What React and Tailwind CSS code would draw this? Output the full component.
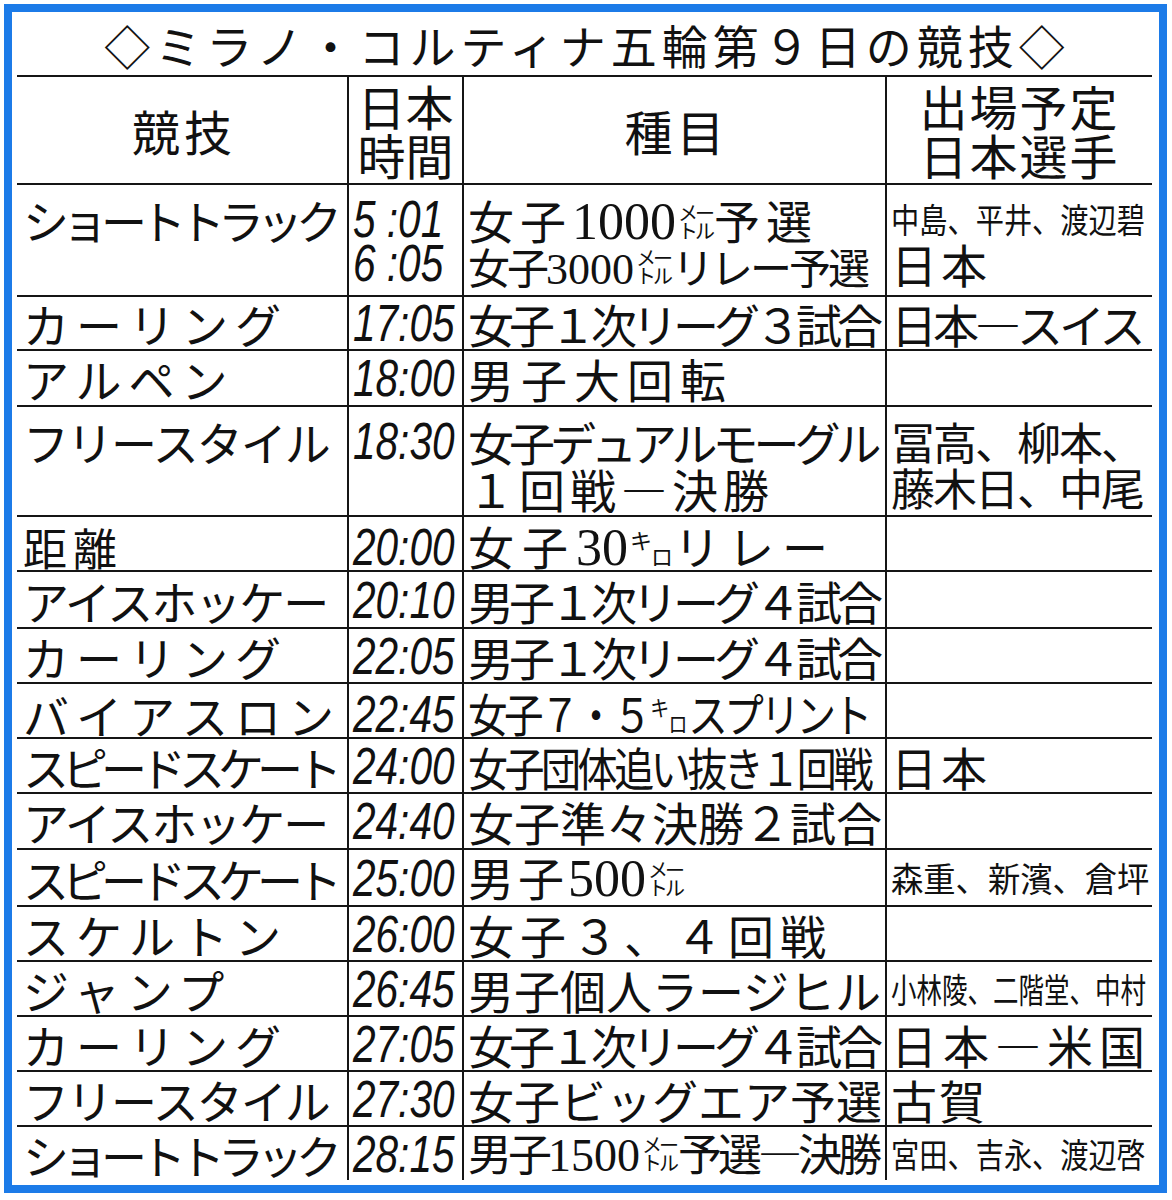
const jp = "font-['Noto_Sans_CJK_JP',sans-serif]";

// one line of text, never wraps; scale classes squeeze long entries into the column
const T = ({ cls = "", children }) => (
   <span className={`inline-block whitespace-nowrap origin-left leading-[44px] ${cls}`}>
      {children}
   </span>
);

const N = ({ cls = "text-[52px]", children }) => (
   <span className={`font-['Liberation_Serif',serif] tracking-[0px] ${cls}`}>{children}</span>
);

// stacked メー / トル unit
const Mt = () => (
   <span className="inline-block text-[20px] leading-[18px] tracking-[-3px] mx-[2px]">
      <span className="block">メー</span>
      <span className="block">トル</span>
   </span>
);

// キロ with raised キ
const Km = () => (
   <span className="tracking-[-1px] mx-[2px]">
      <span className="text-[22px] align-[16px]">キ</span>
      <span className="text-[22px]">ロ</span>
   </span>
);

const Tm = ({ children }) => (
   <span className="block whitespace-nowrap origin-left scale-x-[0.78] font-['Liberation_Sans',sans-serif] italic text-[52px] leading-[44px]">
      {children}
   </span>
);

const Row = ({ h, two, sport, time, event, names }) => {
   const cell = two ? "pt-[12px]" : "flex flex-col justify-center";
   return (
      <div className={`grid grid-cols-[330px_115px_423px_267px] border-t-2 border-[#151515] ${h}`}>
         <div className={`pl-[6px] ${cell}`}>{sport}</div>
         <div className={`border-l-2 border-[#151515] pl-[4px] ${cell}`}>{time}</div>
         <div className={`border-l-2 border-[#151515] pl-[4px] ${cell}`}>{event}</div>
         <div className={`border-l-2 border-[#151515] pl-[4px] ${cell}`}>{names}</div>
      </div>
   );
};

export default function App() {
   return (
      <div className="w-[1172px] h-[1200px] bg-white p-[4px]">
         <div className={`w-[1163px] h-[1189px] border-[8px] border-[#1c7be8] bg-white pl-[5px] pr-[7px] flex flex-col text-[#111] ${jp}`}>
            {/* title */}
            <div className="h-[63px] flex items-center justify-center pl-[5px]">
               <span className="text-[46px] tracking-[5px] leading-none">
                  ◇ミラノ・コルティナ五輪第９日の競技◇
               </span>
            </div>

            {/* header */}
            <div className="grid grid-cols-[330px_115px_423px_267px] border-t-2 border-[#151515] h-[108px] text-[48px]">
               <div className="flex items-center justify-center pl-[4px] tracking-[4px]">競技</div>
               <div className="border-l-2 border-[#151515] flex flex-col items-center justify-center leading-[49px]">
                  <span>日本</span>
                  <span>時間</span>
               </div>
               <div className="border-l-2 border-[#151515] flex items-center justify-center pl-[4px] tracking-[4px]">種目</div>
               <div className="border-l-2 border-[#151515] flex flex-col items-center justify-center leading-[49px] tracking-[2px]">
                  <span>出場予定</span>
                  <span>日本選手</span>
               </div>
            </div>

            <Row
               h="h-[112px]"
               two
               sport={<T cls="text-[46px] tracking-[-7px]">ショートトラック</T>}
               time={<><Tm>5 :01</Tm><Tm>6 :05</Tm></>}
               event={
                  <>
                     <T cls="block text-[46px] tracking-[6px]">女子<N>1000</N><Mt />予選</T>
                     <T cls="block text-[42px] tracking-[-3px]">女子<N cls="text-[44px]">3000</N><Mt />リレー予選</T>
                  </>
               }
               names={
                  <>
                     <T cls="block text-[34px] scale-x-[0.83]">中島、平井、渡辺碧</T>
                     <T cls="block text-[46px] tracking-[4px]">日本</T>
                  </>
               }
            />
            <Row
               h="h-[54px]"
               sport={<T cls="text-[46px] tracking-[7px]">カーリング</T>}
               time={<Tm>17:05</Tm>}
               event={<T cls="text-[46px] tracking-[-5px]">女子１次リーグ３試合</T>}
               names={<T cls="text-[46px] tracking-[-4px]">日本―スイス</T>}
            />
            <Row
               h="h-[56px]"
               sport={<T cls="text-[46px] tracking-[7px]">アルペン</T>}
               time={<Tm>18:00</Tm>}
               event={<T cls="text-[46px] tracking-[7px]">男子大回転</T>}
               names={null}
            />
            <Row
               h="h-[110px]"
               two
               sport={<T cls="text-[46px] tracking-[-2px]">フリースタイル</T>}
               time={<Tm>18:30</Tm>}
               event={
                  <>
                     <T cls="block text-[46px] tracking-[-5px]">女子デュアルモーグル</T>
                     <T cls="block text-[46px] tracking-[5px]">１回戦―決勝</T>
                  </>
               }
               names={
                  <>
                     <T cls="block text-[44px] tracking-[-2px]">冨高、柳本、</T>
                     <T cls="block text-[44px] tracking-[-2px]">藤木日、中尾</T>
                  </>
               }
            />
            <Row
               h="h-[55px]"
               sport={<T cls="text-[44px] tracking-[6px]">距離</T>}
               time={<Tm>20:00</Tm>}
               event={<T cls="text-[46px] tracking-[8px]">女子<N>30</N><Km />リレー</T>}
               names={null}
            />
            <Row
               h="h-[57px]"
               sport={<T cls="text-[46px] tracking-[-2px]">アイスホッケー</T>}
               time={<Tm>20:10</Tm>}
               event={<T cls="text-[46px] tracking-[-5px]">男子１次リーグ４試合</T>}
               names={null}
            />
            <Row
               h="h-[55px]"
               sport={<T cls="text-[46px] tracking-[7px]">カーリング</T>}
               time={<Tm>22:05</Tm>}
               event={<T cls="text-[46px] tracking-[-5px]">男子１次リーグ４試合</T>}
               names={null}
            />
            <Row
               h="h-[55px]"
               sport={<T cls="text-[46px] tracking-[7px]">バイアスロン</T>}
               time={<Tm>22:45</Tm>}
               event={<T cls="text-[46px] tracking-[-4px] scale-x-[0.86]">女子７・５<Km />スプリント</T>}
               names={null}
            />
            <Row
               h="h-[55px]"
               sport={<T cls="text-[46px] tracking-[-7px]">スピードスケート</T>}
               time={<Tm>24:00</Tm>}
               event={<T cls="text-[46px] tracking-[-4px] scale-x-[0.87]">女子団体追い抜き１回戦</T>}
               names={<T cls="text-[46px] tracking-[4px]">日本</T>}
            />
            <Row
               h="h-[56px]"
               sport={<T cls="text-[46px] tracking-[-2px]">アイスホッケー</T>}
               time={<Tm>24:40</Tm>}
               event={<T cls="text-[46px] tracking-[0px]">女子準々決勝２試合</T>}
               names={null}
            />
            <Row
               h="h-[57px]"
               sport={<T cls="text-[46px] tracking-[-7px]">スピードスケート</T>}
               time={<Tm>25:00</Tm>}
               event={<T cls="text-[46px] tracking-[4px]">男子<N>500</N><Mt /></T>}
               names={<T cls="text-[34px] scale-x-[0.95]">森重、新濱、倉坪</T>}
            />
            <Row
               h="h-[55px]"
               sport={<T cls="text-[46px] tracking-[7px]">スケルトン</T>}
               time={<Tm>26:00</Tm>}
               event={<T cls="text-[46px] tracking-[6px]">女子３、４回戦</T>}
               names={null}
            />
            <Row
               h="h-[55px]"
               sport={<T cls="text-[46px] tracking-[7px]">ジャンプ</T>}
               time={<Tm>26:45</Tm>}
               event={<T cls="text-[46px] tracking-[0px]">男子個人ラージヒル</T>}
               names={<T cls="text-[34px] scale-x-[0.75]">小林陵、二階堂、中村</T>}
            />
            <Row
               h="h-[55px]"
               sport={<T cls="text-[46px] tracking-[7px]">カーリング</T>}
               time={<Tm>27:05</Tm>}
               event={<T cls="text-[46px] tracking-[-5px]">女子１次リーグ４試合</T>}
               names={<T cls="text-[46px] tracking-[6px]">日本―米国</T>}
            />
            <Row
               h="h-[55px]"
               sport={<T cls="text-[46px] tracking-[-2px]">フリースタイル</T>}
               time={<Tm>27:30</Tm>}
               event={<T cls="text-[46px] tracking-[0px]">女子ビッグエア予選</T>}
               names={<T cls="text-[46px] tracking-[2px]">古賀</T>}
            />
            <Row
               h="h-[55px]"
               sport={<T cls="text-[46px] tracking-[-7px]">ショートトラック</T>}
               time={<Tm>28:15</Tm>}
               event={<T cls="text-[44px] tracking-[-4px]">男子<N cls="text-[46px]">1500</N><Mt />予選―決勝</T>}
               names={<T cls="text-[34px] scale-x-[0.83]">宮田、吉永、渡辺啓</T>}
            />
         </div>
      </div>
   );
}
